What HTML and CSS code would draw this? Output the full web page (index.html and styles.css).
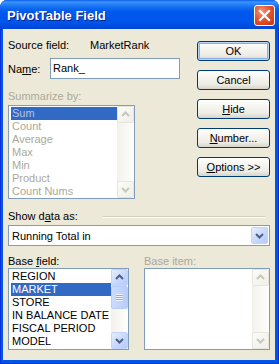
FILE: index.html
```html
<!DOCTYPE html>
<html>
<head>
<meta charset="utf-8">
<link rel="stylesheet" href="styles.css">
</head>
<body>
<div class="window">
  <div class="titlebar">
    <span class="title">PivotTable Field</span>
    <span class="close"><svg width="21" height="21" viewBox="0 0 21 21"><path d="M6 6 L15 15 M15 6 L6 15" stroke="#fff" stroke-width="2.2" stroke-linecap="square"/></svg></span>
  </div>
  <div class="client">
    <div class="top">
      <div class="left">
        <div class="src"><span class="srclbl">Source field:</span><span>MarketRank</span></div>
        <div class="namerow"><span class="namelbl">Na<u>m</u>e:</span><div class="textbox">Rank_</div></div>
        <div class="caption dis">Summarize by:</div>
        <div class="listbox sumlist">
          <div class="items dis">
            <div class="item sel dissel">Sum</div>
            <div class="item">Count</div>
            <div class="item">Average</div>
            <div class="item">Max</div>
            <div class="item">Min</div>
            <div class="item">Product</div>
            <div class="item">Count Nums</div>
          </div>
          <div class="vscroll">
            <div class="sbtn off"><svg width="15" height="15" viewBox="0 0 15 15"><path d="M4 9 L7.5 5.5 L11 9" fill="none" stroke="#C9C7BA" stroke-width="2"/></svg></div>
            <div class="track"></div>
            <div class="sbtn off"><svg width="15" height="15" viewBox="0 0 15 15"><path d="M4 6 L7.5 9.5 L11 6" fill="none" stroke="#C9C7BA" stroke-width="2"/></svg></div>
          </div>
        </div>
      </div>
      <div class="buttons">
        <div class="btn default">OK</div>
        <div class="btn">Cancel</div>
        <div class="btn"><u>H</u>ide</div>
        <div class="btn"><u>N</u>umber...</div>
        <div class="btn"><u>O</u>ptions &gt;&gt;</div>
      </div>
    </div>
    <div class="showrow"><span>Show d<u>a</u>ta as:</span><div class="sep"></div></div>
    <div class="combo">
      <span class="combotext">Running Total in</span>
      <div class="sbtn dd"><svg width="15" height="15" viewBox="0 0 15 15"><path d="M4 6 L7.5 9.5 L11 6" fill="none" stroke="#4D6185" stroke-width="2"/></svg></div>
    </div>
    <div class="bottom">
      <div class="col">
        <div class="caption">Base <u>f</u>ield:</div>
        <div class="listbox baselist">
          <div class="items">
            <div class="item">REGION</div>
            <div class="item sel">MARKET</div>
            <div class="item">STORE</div>
            <div class="item">IN BALANCE DATE</div>
            <div class="item">FISCAL PERIOD</div>
            <div class="item">MODEL</div>
          </div>
          <div class="vscroll">
            <div class="sbtn"><svg width="15" height="15" viewBox="0 0 15 15"><path d="M4 9 L7.5 5.5 L11 9" fill="none" stroke="#4D6185" stroke-width="2"/></svg></div>
            <div class="track">
              <div class="thumb"><div class="grip"></div></div>
            </div>
            <div class="sbtn"><svg width="15" height="15" viewBox="0 0 15 15"><path d="M4 6 L7.5 9.5 L11 6" fill="none" stroke="#4D6185" stroke-width="2"/></svg></div>
          </div>
        </div>
      </div>
      <div class="col">
        <div class="caption dis">Base item:</div>
        <div class="listbox itemlist">
          <div class="items"></div>
          <div class="vscroll">
            <div class="sbtn off"><svg width="15" height="15" viewBox="0 0 15 15"><path d="M4 9 L7.5 5.5 L11 9" fill="none" stroke="#C9C7BA" stroke-width="2"/></svg></div>
            <div class="track"></div>
            <div class="sbtn off"><svg width="15" height="15" viewBox="0 0 15 15"><path d="M4 6 L7.5 9.5 L11 6" fill="none" stroke="#C9C7BA" stroke-width="2"/></svg></div>
          </div>
        </div>
      </div>
    </div>
  </div>
</div>
</body>
</html>
```

FILE: styles.css
```css
* { box-sizing: border-box; }
html, body { margin: 0; padding: 0; }
body {
  width: 279px;
  height: 364px;
  overflow: hidden;
  background: #fff;
  font-family: "Liberation Sans", Arial, sans-serif;
  font-size: 11px;
  color: #000;
}
u { text-decoration: underline; text-underline-offset: 1px; }

.window {
  width: 279px;
  height: 364px;
  background: #0055E5;
  border: 1px solid #0831D9;
  border-top: none;
  border-radius: 7px 7px 0 0;
  display: flex;
  flex-direction: column;
}
.titlebar {
  height: 29px;
  flex: none;
  margin: 0 -1px;
  border-radius: 7px 7px 0 0;
  background: linear-gradient(to bottom, #0A5FE8 0px, #3D95FF 2px, #2A84FA 4px, #0E6AF0 8px, #0058EE 12px, #0055EA 22px, #004CDF 26px, #0044D2 29px);
  display: flex;
  align-items: center;
  justify-content: space-between;
  padding: 0 4px 0 7px;
}
.title {
  color: #fff;
  font-family: "Liberation Sans", Arial, sans-serif;
  font-weight: bold;
  font-size: 13px;
  text-shadow: 1px 1px 0 #0A1E8C;
  margin-top: 1px;
}
.close {
  width: 21px;
  height: 21px;
  border: 1px solid #fff;
  border-radius: 3px;
  background: radial-gradient(circle at 35% 30%, #F29B7C 0%, #E3552F 45%, #C63310 100%);
  display: flex;
  align-items: center;
  justify-content: center;
  margin-top: 2px;
}
.close svg { display: block; margin: -1px; }

.client {
  flex: 1;
  margin: 0 3px 3px 2px;
  background: #ECE9D8;
  padding: 10px 5px 0 5px;
  display: flex;
  flex-direction: column;
}
.top {
  display: grid;
  grid-template-columns: 1fr 73px;
}
.left { display: flex; flex-direction: column; }
.src { display: flex; line-height: 13px; height: 13px; }
.srclbl { width: 82px; }
.namerow {
  display: flex;
  align-items: center;
  margin-top: 6px;
  height: 21px;
}
.namelbl { width: 42px; }
.textbox {
  width: 130px;
  height: 21px;
  border: 1px solid #7F9DB9;
  background: #fff;
  padding-left: 2px;
  line-height: 19px;
}
.caption { line-height: 13px; height: 13px; }
.left .caption { margin-top: 11px; }
.dis { color: #ACA899; }

.listbox {
  border: 1px solid #7F9DB9;
  background: #fff;
  display: flex;
  overflow: hidden;
}
.sumlist { width: 127px; height: 94px; margin-top: 2px; }
.items { flex: 1; padding: 1px 0 0 2px; }
.item { line-height: 13px; height: 13px; padding-left: 1px; white-space: nowrap; }
.sel { background: #316AC5; color: #fff; }
.dissel { color: #BAC2DA; }

.vscroll {
  width: 17px;
  flex: none;
  display: flex;
  flex-direction: column;
  background: linear-gradient(to right, #F3F1EC, #FEFEFB);
}
.track { flex: 1; display: flex; flex-direction: column; }
.sbtn {
  width: 17px;
  height: 17px;
  flex: none;
  border: 1px solid #C3D3FD;
  border-radius: 2px;
  background: linear-gradient(to bottom right, #E6EEFC, #C5D6FC 60%, #B6CBF8);
  display: flex;
  align-items: center;
  justify-content: center;
}
.sbtn.off {
  border-color: #E8E6DC;
  background: linear-gradient(to bottom right, #FBFBF8, #F0EFE8);
}
.thumb {
  margin-top: 0;
  height: 23px;
  border: 1px solid #B8CCF8;
  border-radius: 2px;
  background: linear-gradient(to right, #CDDBFC, #C2D4FD 50%, #B9CDFA);
  display: flex;
  align-items: center;
  justify-content: center;
}
.grip {
  width: 7px;
  height: 7px;
  background: repeating-linear-gradient(to bottom, #EEF4FE 0, #EEF4FE 1px, #8CB0F8 1px, #8CB0F8 2px);
}

.buttons {
  display: flex;
  flex-direction: column;
  gap: 9px;
  padding-top: 2px;
}
.btn {
  width: 73px;
  height: 20px;
  border: 1px solid #003C74;
  border-radius: 3px;
  background: linear-gradient(to bottom, #FFFFFF 0%, #F5F4EF 40%, #ECEBE4 75%, #D8D3C8 100%);
  display: flex;
  align-items: center;
  justify-content: center;
}
.btn.default {
  box-shadow: inset 0 0 0 1px #BCD4F6, inset 0 0 0 2px #89ADE4;
}

.showrow {
  display: flex;
  align-items: center;
  margin-top: 11px;
  height: 13px;
  line-height: 13px;
}
.sep {
  margin-left: auto;
  margin-right: 5px;
  width: 162px;
  height: 2px;
  border-top: 1px solid #D0D0BF;
  border-bottom: 1px solid #fff;
}
.combo {
  margin-top: 2px;
  height: 21px;
  border: 1px solid #7F9DB9;
  background: #fff;
  display: flex;
  align-items: center;
  justify-content: space-between;
  padding: 0 1px 0 3px;
}
.bottom {
  display: grid;
  grid-template-columns: 121px 1fr;
  column-gap: 15px;
  margin-top: 9px;
}
.col { display: flex; flex-direction: column; }
.baselist, .itemlist { height: 82px; }
```
